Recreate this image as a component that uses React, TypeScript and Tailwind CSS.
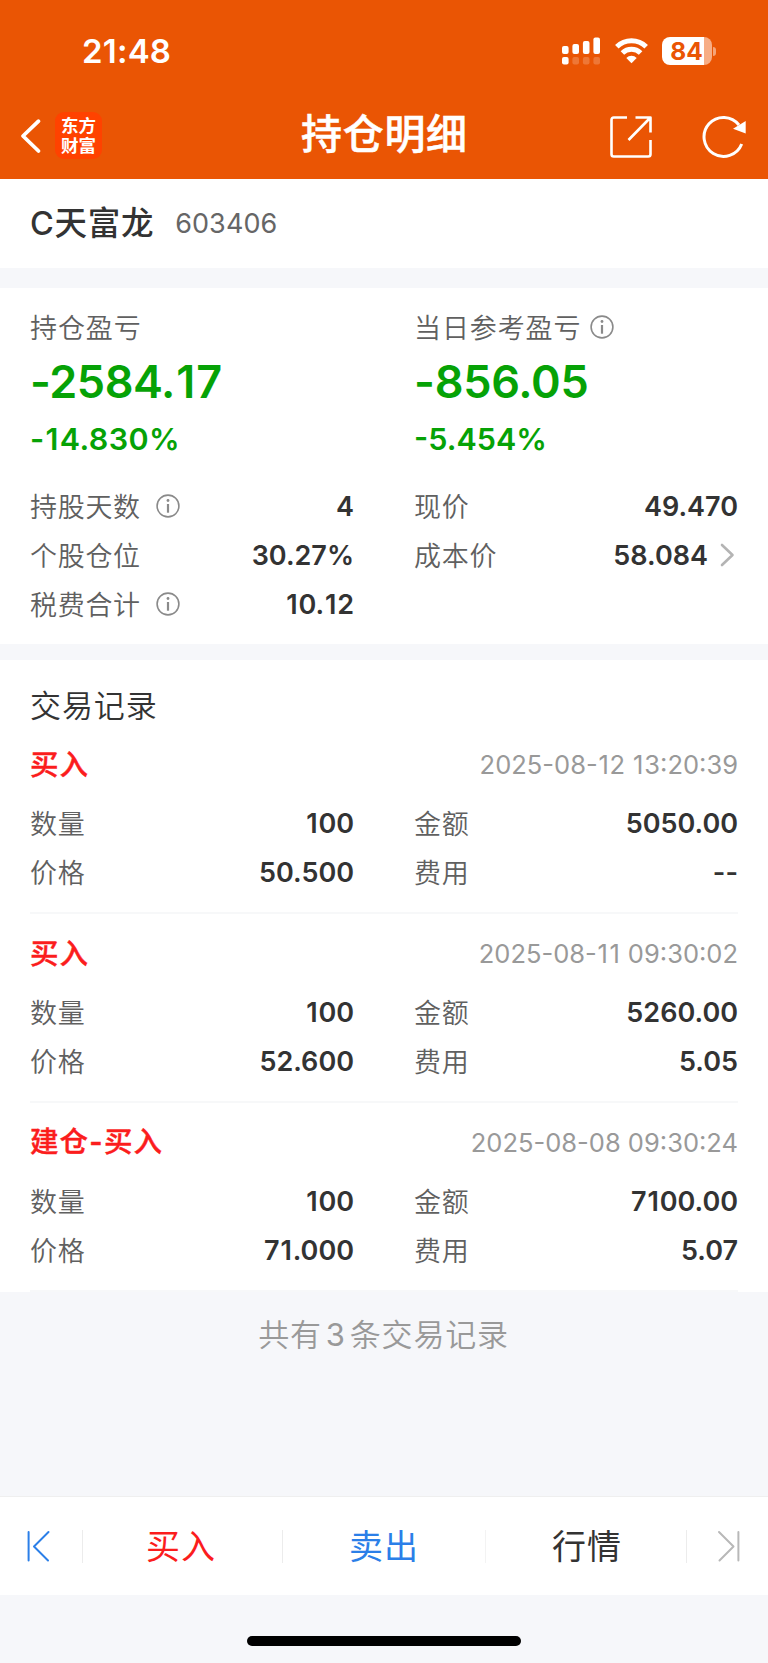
import React from "react";

const CJK = "font-['Noto_Sans_CJK_SC',sans-serif]";
const NUM = "font-['Inter','Noto_Sans_CJK_SC',sans-serif]";

/* Figures with a slightly wider "1" so that columns of prices look even. */
function Num({ children }: { children: string }) {
  return (
    <>
      {children.split("").map((c, i) =>
        c === "1" ? (
          <span key={i} className="px-[0.031em]">1</span>
        ) : (
          <React.Fragment key={i}>{c}</React.Fragment>
        )
      )}
    </>
  );
}

function InfoIcon() {
  return (
    <svg width="24" height="24" viewBox="0 0 24 24" fill="none" stroke="#8a8a8a" className="shrink-0">
      <circle cx="12" cy="12" r="10.9" strokeWidth="1.6" />
      <path d="M12 10v8.7" strokeWidth="2.2" />
      <circle cx="12" cy="6.500" r="1.400" fill="#8a8a8a" stroke="none" />
    </svg>
  );
}

function StatusBar() {
  return (
    <div className="flex h-[102px] items-center">
      <div className={`${NUM} ml-[82px] w-[480px] text-[33px] font-semibold leading-[40px] tracking-[0.2px]`}>21:48</div>
      <svg width="39" height="28" viewBox="0 0 39 28" fill="#fff" className="shrink-0">
        <rect x="0" y="9" width="6.6" height="8" rx="2" />
        <rect x="10.4" y="7" width="6.6" height="10" rx="2" />
        <rect x="20.9" y="4" width="6.6" height="13" rx="2" />
        <rect x="31.4" y="0.4" width="6.6" height="16.6" rx="2" />
        <rect x="0" y="20" width="6.6" height="7.6" rx="2" />
        <g opacity="0.2">
          <rect x="10.4" y="20" width="6.6" height="7.6" rx="2" />
          <rect x="20.9" y="20" width="6.6" height="7.6" rx="2" />
          <rect x="31.4" y="20" width="6.6" height="7.6" rx="2" />
        </g>
      </svg>
      <svg width="33" height="26" viewBox="0 0 33 26" fill="none" stroke="#fff" strokeWidth="5" className="ml-[14px] shrink-0">
        <path d="M1.800 8.800a21 21 0 0 1 29.400 0" />
        <path d="M7.400 15a13 13 0 0 1 18.200 0" />
        <path d="M16.500 25.200L11.300 20a7.400 7.400 0 0 1 10.400 0z" fill="#fff" stroke="none" />
      </svg>
      <div className="ml-[14px] flex items-center">
        <div className="flex h-[28px] w-[50px] items-center overflow-hidden rounded-[8px] bg-[linear-gradient(90deg,#fff_84%,#f7ad85_84%)]">
          <span className={`${NUM} w-[49px] text-center text-[24.500px] font-bold leading-[28px] text-[#ea5504]`}>84</span>
        </div>
        <div className="ml-[1px] h-[9px] w-[3px] rounded-r-full bg-[#f5a478]" />
      </div>
    </div>
  );
}

function NavBar() {
  return (
    <div className="flex h-[77px] items-start">
      <svg width="24" height="36" viewBox="0 0 24 36" fill="none" stroke="#fff" strokeWidth="3.8" strokeLinecap="round" strokeLinejoin="round" className="ml-[19px] mt-[16px] shrink-0">
        <path d="M19.500 3.200L4 18l15.500 15" />
      </svg>
      <div className={`${CJK} ml-[12px] mt-[10px] h-[47px] w-[47px] rounded-[9px] bg-[#ff4200] pt-[3px] text-center text-[17.500px] font-bold leading-[19.500px]`}>
        东方
        <br />
        财富
      </div>
      <h1 className={`${CJK} ml-[199px] mt-[-1px] w-[170px] whitespace-nowrap text-[41px] font-medium leading-[60px] tracking-[0.700px] [-webkit-text-stroke:0.5px_#fff]`}>持仓明细</h1>
      <svg width="42" height="42" viewBox="0 0 42 42" fill="none" stroke="#fff" strokeWidth="2.6" strokeLinejoin="round" className="ml-[139px] mt-[14px] shrink-0">
        <path d="M17 1.500H3.800Q1.500 1.500 1.500 3.800V38.200Q1.500 40.500 3.800 40.500H38.200Q40.500 40.500 40.500 38.200V24" />
        <path d="M25.500 1.500H40.500V16.500M40 2L18.500 24" />
      </svg>
      <svg width="46" height="44" viewBox="0 0 46 44" fill="none" stroke="#fff" strokeWidth="3" className="ml-[49px] mt-[13px] shrink-0">
        <path d="M40.700 29A19.500 19.500 0 1 1 38 10" />
        <path d="M44.700 6V18.500L32 13.800Z" fill="#fff" stroke="none" />
      </svg>
    </div>
  );
}

function Row({ label, value, info, chevron }: { label: string; value: string; info?: boolean; chevron?: boolean }) {
  return (
    <div className="flex h-[49.200px] items-center">
      <span className={`${CJK} text-[27px] font-[350] leading-[40px] tracking-[0.700px] text-[#606060]`}>{label}</span>
      {info && (
        <span className="ml-[15px] pt-[1px]">
          <InfoIcon />
        </span>
      )}
      <span className={`${NUM} ml-auto pt-[2px] text-[27px] font-semibold leading-[40px] text-[#333]`}>
        <Num>{value}</Num>
      </span>
      {chevron && (
        <svg width="16" height="24" viewBox="0 0 16 24" fill="none" stroke="#b4b4b4" strokeWidth="2.6" strokeLinecap="round" strokeLinejoin="round" className="ml-[12px] mr-[2px] shrink-0">
          <path d="M2 2L12.500 12L2 22" />
        </svg>
      )}
    </div>
  );
}

function Profit({ label, amount, percent, info, amountClass, percentClass }: { label: string; amount: string; percent: string; info?: boolean; amountClass: string; percentClass: string }) {
  return (
    <div>
      <div className="flex h-[40px] items-center">
        <span className={`${CJK} text-[27px] font-[350] leading-[40px] tracking-[0.900px] text-[#606060]`}>{label}</span>
        {info && (
          <span className="ml-[9px]">
            <InfoIcon />
          </span>
        )}
      </div>
      <div className={`${NUM} ${amountClass} mt-[7px] h-[56px] text-[45px] font-semibold leading-[56px] text-[#06a206]`}>
        <Num>{amount}</Num>
      </div>
      <div className={`${NUM} ${percentClass} mb-[1px] mt-[9px] h-[40px] text-[30.500px] font-semibold leading-[40px] text-[#06a206]`}>
        <Num>{percent}</Num>
      </div>
    </div>
  );
}

const records = [
  { type: "买入", time: "2025-08-12 13:20:39", qty: "100", amount: "5050.00", price: "50.500", fee: "--" },
  { type: "买入", time: "2025-08-11 09:30:02", qty: "100", amount: "5260.00", price: "52.600", fee: "5.05" },
  { type: "建仓-买入", time: "2025-08-08 09:30:24", qty: "100", amount: "7100.00", price: "71.000", fee: "5.07" },
];

function TradeType({ type }: { type: string }) {
  const parts = type.split("-");
  return (
    <span className={`${CJK} text-[28.500px] font-medium leading-[40px] tracking-[0.900px] text-[#fb1d1d] [-webkit-text-stroke:0.4px_#fb1d1d]`}>
      {parts.map((p, i) => (
        <React.Fragment key={i}>
          {i > 0 && <span className="mx-[0.500px] font-['Inter'] font-semibold">-</span>}
          {p}
        </React.Fragment>
      ))}
    </span>
  );
}

function TradeRecord({ r }: { r: (typeof records)[number] }) {
  return (
    <div className="mx-[30px] h-[189px] border-b-2 border-[#f7f8f9] pt-[14px]">
      <div className="flex h-[48px] items-center justify-between">
        <TradeType type={r.type} />
        <span className={`${NUM} pt-[3px] text-[25.500px] leading-[40px] text-[#999]`}>
          <Num>{r.time}</Num>
        </span>
      </div>
      <div className="mt-[11px] grid grid-cols-2 gap-x-[60px]">
        <Row label="数量" value={r.qty} />
        <Row label="金额" value={r.amount} />
        <Row label="价格" value={r.price} />
        <Row label="费用" value={r.fee} />
      </div>
    </div>
  );
}

export default function App() {
  return (
    <div className="flex h-[1663px] w-[768px] flex-col overflow-hidden bg-[#f6f7fa]">
      <header className="h-[179px] bg-[#ea5504] text-white">
        <StatusBar />
        <NavBar />
      </header>

      <section className="flex h-[89px] items-center bg-white pl-[30px]">
        <div className={`${NUM} text-[32.500px] font-medium leading-[40px] tracking-[0.700px] text-[#333]`}>C天富龙</div>
        <div className={`${NUM} ml-[21px] text-[27px] leading-[40px] tracking-[0.100px] text-[#666]`}>603406</div>
      </section>

      <section className="mt-[20px] h-[356px] bg-white px-[30px] pt-[19px]">
        <div className="grid grid-cols-2 gap-x-[60px]">
          <Profit label="持仓盈亏" amount="-2584.17" percent="-14.830%" amountClass="tracking-[-0.500px]" percentClass="tracking-[0.400px]" />
          <Profit label="当日参考盈亏" amount="-856.05" percent="-5.454%" info amountClass="tracking-[-0.300px]" percentClass="tracking-normal" />
        </div>
        <div className="mt-[21px] grid grid-cols-2 gap-x-[60px]">
          <Row label="持股天数" value="4" info />
          <Row label="现价" value="49.470" />
          <Row label="个股仓位" value="30.27%" />
          <Row label="成本价" value="58.084" chevron />
          <Row label="税费合计" value="10.12" info />
        </div>
      </section>

      <section className="mt-[16px] bg-white">
        <h2 className={`${CJK} h-[65px] pl-[30px] pt-[24px] text-[31px] font-[350] leading-[40px] tracking-[0.900px] text-[#333]`}>交易记录</h2>
        {records.map((r) => (
          <TradeRecord key={r.time} r={r} />
        ))}
      </section>

      <p className={`${CJK} mt-[21px] pr-[1px] text-center text-[31px] font-[350] leading-[40px] tracking-[0.800px] text-[#999]`}>
        共有<span className="mx-[4px] font-['Inter'] font-normal">3</span>条交易记录
      </p>

      <nav className={`${CJK} mt-auto flex h-[99px] items-center border-t border-[#efefef] bg-white text-[34px] leading-[48px] tracking-[1px]`}>
        <div className="flex w-[82px] pl-[26px]">
          <svg width="26" height="32" viewBox="0 0 26 32" fill="none" stroke="#2b7fe8" strokeWidth="2" strokeLinecap="round" strokeLinejoin="round">
            <path d="M2.600 2V30.500M22.500 2L8 16.500L22 30.500" />
          </svg>
        </div>
        <div className="h-[33px] w-[1px] bg-[#ececec]" />
        <div className="w-[199px] pb-[2px] pr-[3px] text-center text-[#fb1d1d]">买入</div>
        <div className="h-[33px] w-[1px] bg-[#ececec]" />
        <div className="w-[202px] pb-[2px] text-center text-[#2b7fe8]">卖出</div>
        <div className="h-[33px] w-[1px] bg-[#f3f3f3]" />
        <div className="w-[200px] pb-[2px] pl-[2px] text-center text-[#333]">行情</div>
        <div className="h-[33px] w-[1px] bg-[#ececec]" />
        <div className="flex flex-1 pl-[29px]">
          <svg width="26" height="32" viewBox="0 0 26 32" fill="none" stroke="#b8b8b8" strokeWidth="2" strokeLinecap="round" strokeLinejoin="round">
            <path d="M22.400 2V30.500M3 2L17.500 16.500L3.500 30.500" />
          </svg>
        </div>
      </nav>

      <div className="flex h-[68px] shrink-0 justify-center pt-[41px]">
        <div className="h-[10px] w-[274px] rounded-full bg-black" />
      </div>
    </div>
  );
}
